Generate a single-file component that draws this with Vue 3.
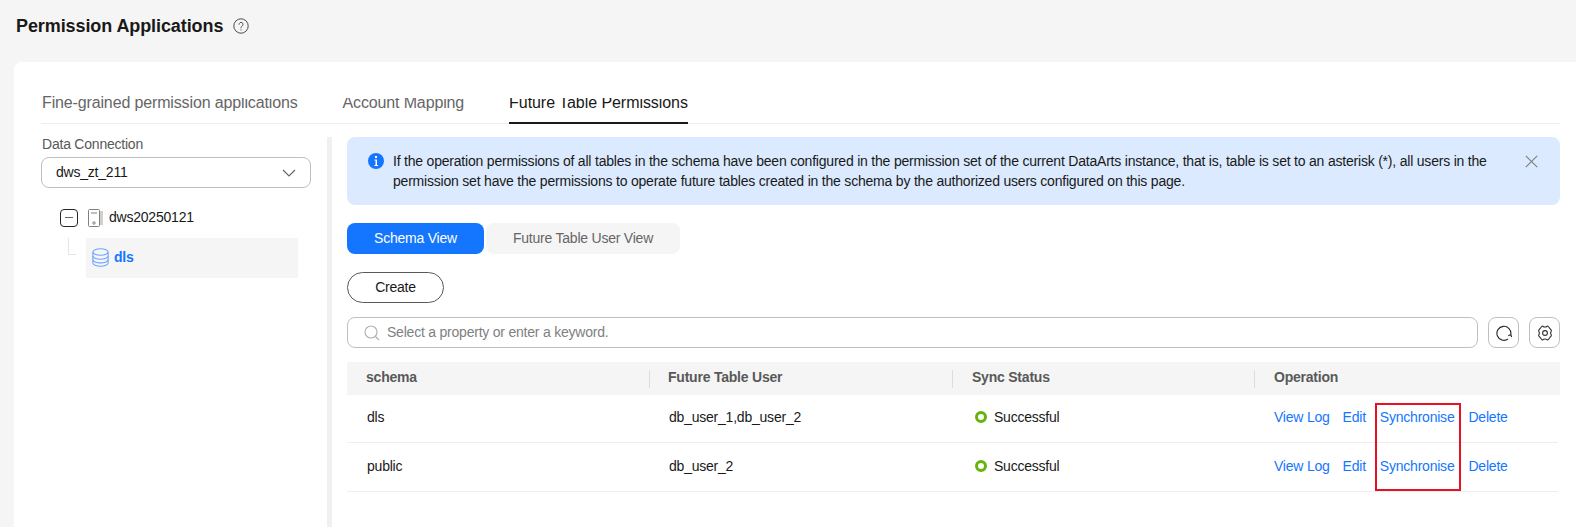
<script setup>
const rows = [
  { schema: 'dls', users: 'db_user_1,db_user_2' },
  { schema: 'public', users: 'db_user_2' },
]
const ops = ['View Log', 'Edit', 'Synchronise', 'Delete']
</script>

<template>
  <div class="page">
    <header class="title-bar">
      <h1>Permission Applications</h1>
      <svg class="help" width="16" height="16" viewBox="0 0 16 16" fill="none" stroke="#4d4d4d">
        <circle cx="8" cy="8" r="7.2" />
        <path d="M6 6.3a2 2 0 1 1 3.1 1.7C8.4 8.500 8 8.900 8 9.800" stroke-linecap="round" />
        <circle cx="8" cy="11.800" r=".6" fill="#4d4d4d" stroke="none" />
      </svg>
    </header>

    <section class="card">
      <nav class="tabs">
        <span class="tab">Fine-grained permission applications</span>
        <span class="tab">Account Mapping</span>
        <span class="tab active">Future Table Permissions</span>
        <i class="tab-mask"></i>
      </nav>

      <div class="body">
        <aside class="side">
          <label class="side-label">Data Connection</label>
          <div class="select">
            <span>dws_zt_211</span>
            <svg width="14" height="8" viewBox="0 0 14 8" fill="none" stroke="#666" stroke-width="1.2">
              <path d="M1 1l6 6 6-6" />
            </svg>
          </div>

          <div class="tree-root">
            <span class="collapse"><i></i></span>
            <svg width="16" height="18" viewBox="0 0 16 18" fill="none" stroke="#808080">
              <rect x=".5" y=".5" width="11" height="17" rx="1" />
              <path d="M3 4h6" />
              <circle cx="6" cy="14" r="1.2" />
              <rect x="12" y="2" width="3" height="14" fill="#d0d0d0" stroke="none" />
            </svg>
            <span class="root-name">dws20250121</span>
          </div>
          <div class="tree-child">
            <span class="connector"></span>
            <div class="node">
              <svg width="17" height="19" viewBox="0 0 17 19" fill="none" stroke="#6aa5ff" stroke-width="1.1">
                <ellipse cx="8.5" cy="4" rx="7.6" ry="3.2" />
                <path d="M.9 4v11c0 1.800 3.400 3.200 7.600 3.200s7.600-1.400 7.600-3.200V4" />
                <path d="M.9 8c0 1.800 3.400 3.200 7.600 3.200S16.100 9.800 16.100 8M.9 11.700c0 1.800 3.400 3.200 7.600 3.200s7.600-1.400 7.600-3.200" />
              </svg>
              <span class="node-name">dls</span>
            </div>
          </div>
        </aside>

        <main class="main">
          <div class="alert">
            <svg class="info" width="16" height="16" viewBox="0 0 16 16">
              <circle cx="8" cy="8" r="8" fill="#1476ff" />
              <rect x="7" y="3" width="2" height="2" fill="#fff" />
              <path d="M6.500 6.500H9v5.500h1v1H6.500v-1h1V7.500h-1z" fill="#fff" />
            </svg>
            <p>If the operation permissions of all tables in the schema have been configured in the permission set of the current DataArts instance, that is, table is set to an asterisk (*), all users in the permission set have the permissions to operate future tables created in the schema by the authorized users configured on this page.</p>
            <svg class="close" width="13" height="13" viewBox="0 0 13 13" stroke="#808080" stroke-width="1.2">
              <path d="M.8.8l11.400 11.400M12.200.8L.8 12.200" />
            </svg>
          </div>

          <div class="segments">
            <span class="seg on">Schema View</span>
            <span class="seg off">Future Table User View</span>
          </div>

          <button class="create">Create</button>

          <div class="search-row">
            <div class="search">
              <svg width="16" height="16" viewBox="0 0 16 16" fill="none" stroke="#b3b3b3" stroke-width="1.2">
                <circle cx="7" cy="7" r="6" />
                <path d="M11.500 11.500L15 15" />
              </svg>
              <span>Select a property or enter a keyword.</span>
            </div>
            <span class="icon-btn">
              <svg width="16" height="16" viewBox="0 0 16 16" fill="none" stroke="#262626" stroke-width="1.1">
                <path d="M14.800 9.500A7 7 0 1 0 12 14" />
                <path d="M14.800 9.500l-2.500 1.200M14.800 9.500l.9 2.600" />
              </svg>
            </span>
            <span class="icon-btn">
              <svg width="16" height="16" viewBox="0 0 16 16" fill="none" stroke="#333" stroke-width="1.1">
                <path d="M5.800 1.300c1.300.9 3.100.9 4.400 0 .4-.2.900-.1 1.100.2l2.900 3.600c.2.300.2.700 0 1-.8 1.200-.8 2.600 0 3.800.2.300.2.700 0 1l-2.900 3.600c-.2.300-.7.400-1.100.2-1.300-.9-3.100-.9-4.400 0-.4.200-.9.100-1.100-.2L1.800 10.900c-.2-.3-.2-.7 0-1 .8-1.200.8-2.600 0-3.800-.2-.3-.2-.7 0-1l2.900-3.600c.2-.3.700-.4 1.100-.2z" />
                <circle cx="8" cy="8" r="2.400" />
              </svg>
            </span>
          </div>

          <div class="table">
            <div class="thead">
              <span class="th">schema</span>
              <span class="th">Future Table User</span>
              <span class="th">Sync Status</span>
              <span class="th">Operation</span>
            </div>
            <div v-for="row in rows" :key="row.schema" class="tr">
              <span class="td">{{ row.schema }}</span>
              <span class="td">{{ row.users }}</span>
              <span class="td status"><i class="dot"></i>Successful</span>
              <span class="td links">
                <a v-for="op in ops" :key="op">{{ op }}</a>
              </span>
            </div>
            <i class="highlight"></i>
          </div>
        </main>
      </div>
    </section>
  </div>
</template>

<style>
html, body { margin: 0; background: #f5f5f5; }
</style>

<style scoped>
.page {
  width: 1576px;
  height: 527px;
  overflow: hidden;
  background: #f5f5f5;
  font-family: "Liberation Sans", Arial, sans-serif;
  font-size: 14px;
  letter-spacing: -0.22px;
  color: #191919;
  display: flex;
  flex-direction: column;
}
.title-bar {
  height: 62px;
  flex: none;
  box-sizing: border-box;
  padding: 15px 0 0 16px;
  display: flex;
  align-items: flex-start;
  gap: 10px;
}
.title-bar h1 {
  margin: 0;
  font-size: 18px;
  line-height: 22px;
  font-weight: 700;
  letter-spacing: -0.09px;
}
.help { margin-top: 3px; }
.card {
  flex: 1;
  margin-left: 14px;
  padding: 0 16px 0 27px;
  background: #fff;
  border-radius: 8px 0 0 0;
}
.tabs {
  position: relative;
  height: 62px;
  box-sizing: border-box;
  display: flex;
  align-items: flex-end;
  gap: 45px;
  border-bottom: 1px solid #eee;
  padding-left: 1px;
}
.tab {
  font-size: 16px;
  line-height: 20px;
  letter-spacing: -0.14px;
  padding-bottom: 9px;
  color: #666;
  border-bottom: 2px solid transparent;
  margin-bottom: -1px;
}
.tab.active {
  color: #191919;
  letter-spacing: -0.06px;
  border-bottom-color: #191919;
}
.tab-mask {
  position: absolute;
  left: 183px;
  top: 24px;
  width: 480px;
  height: 12px;
  background: #fff;
}
.body { display: flex; height: 403px; padding-top: 13px; box-sizing: border-box; }
.side {
  width: 286px;
  flex: none;
  box-sizing: border-box;
}
.side-label {
  display: block;
  line-height: 14px;
  color: #595959;
  margin-bottom: 6px;
  padding-left: 1px;
}
.select {
  width: 270px;
  height: 31px;
  box-sizing: border-box;
  border: 1px solid #c0c0c0;
  border-radius: 8px;
  padding: 0 14px;
  display: flex;
  align-items: center;
  justify-content: space-between;
}
.select span { padding-bottom: 2px; }
.tree-root {
  margin: 20px 0 0 19px;
  height: 19px;
  display: flex;
  align-items: center;
  gap: 10px;
}
.root-name { margin-left: -5px; padding-bottom: 2px; }
.collapse {
  width: 18px;
  height: 18px;
  box-sizing: border-box;
  border: 1px solid #262626;
  border-radius: 4px;
  display: flex;
  align-items: center;
  justify-content: center;
}
.collapse i { width: 8px; height: 1px; background: #666; }
.tree-child {
  display: flex;
  margin: 11px 0 0 27px;
}
.connector {
  width: 8px;
  height: 17px;
  box-sizing: border-box;
  border-left: 1px solid #e5e5e5;
  border-bottom: 1px solid #e5e5e5;
  margin-right: 10px;
}
.node {
  width: 212px;
  height: 40px;
  background: #f5f5f5;
  display: flex;
  align-items: center;
  gap: 5px;
  padding-left: 6px;
  box-sizing: border-box;
  color: #1476ff;
  font-weight: 700;
}
.node svg { margin-bottom: 1px; }
.node-name { padding-bottom: 3px; }
.main {
  flex: 1;
  border-left: 5px solid #f0f0f0;
  padding-left: 15px;
  min-width: 0;
}
.alert {
  height: 68px;
  box-sizing: border-box;
  background: #dbeafe;
  border-radius: 8px;
  padding: 14px 22px 0 21px;
  display: flex;
  align-items: flex-start;
}
.info { flex: none; margin-top: 2px; }
.alert p {
  margin: 0 15px 0 9px;
  line-height: 20px;
  color: #191919;
  letter-spacing: -0.205px;
}
.close { flex: none; margin-top: 4px; }
.segments {
  display: flex;
  gap: 2px;
  margin-top: 18px;
}
.seg {
  height: 31px;
  line-height: 30px;
  text-align: center;
  border-radius: 8px;
}
.seg.on { width: 137px; background: #1476ff; color: #fff; }
.seg.off { width: 194px; background: #f5f5f5; color: #666; }
.create {
  display: block;
  margin-top: 18px;
  width: 97px;
  height: 31px;
  padding: 0 0 2px;
  border: 1px solid #595959;
  border-radius: 16px;
  background: #fff;
  color: #191919;
  font: inherit;
  letter-spacing: inherit;
}
.search-row {
  display: flex;
  margin-top: 14px;
  gap: 10px;
}
.search {
  flex: 1;
  height: 31px;
  box-sizing: border-box;
  border: 1px solid #c0c0c0;
  border-radius: 8px;
  padding-left: 16px;
  display: flex;
  align-items: center;
  gap: 7px;
  color: #808080;
}
.search span { padding-bottom: 2px; }
.icon-btn {
  width: 31px;
  height: 31px;
  box-sizing: border-box;
  border: 1px solid #c0c0c0;
  border-radius: 8px;
  display: flex;
  align-items: center;
  justify-content: center;
}
.table { position: relative; margin-top: 14px; }
.thead, .tr {
  display: grid;
  grid-template-columns: 302px 303px 302px 1fr;
}
.thead {
  height: 33px;
  background: #f5f5f5;
  align-items: center;
}
.th {
  height: 18px;
  line-height: 15px;
  font-weight: 700;
  color: #595959;
  padding-left: 19px;
}
.th + .th { border-left: 1px solid #ddd; }
.th:nth-child(2) { padding-left: 18px; }
.tr {
  height: 48px;
  box-sizing: border-box;
  padding-bottom: 3px;
  align-items: center;
  border-bottom: 1px solid #eee;
  margin-right: 2px;
}
.tr + .tr { height: 49px; }
.td { padding-left: 20px; }
.status {
  display: flex;
  align-items: center;
  padding-left: 23px;
}
.dot {
  width: 12px;
  height: 12px;
  box-sizing: border-box;
  border: 3px solid #66b30a;
  border-radius: 50%;
  margin-right: 7px;
}
.links {
  display: flex;
  gap: 14px;
  padding-left: 20px;
}
.links a { color: #1476ff; }
.links a:first-child { margin-right: -1px; }
.highlight {
  position: absolute;
  left: 1028px;
  top: 41px;
  width: 86px;
  height: 88px;
  box-sizing: border-box;
  border: 2px solid #e81123;
}
</style>
